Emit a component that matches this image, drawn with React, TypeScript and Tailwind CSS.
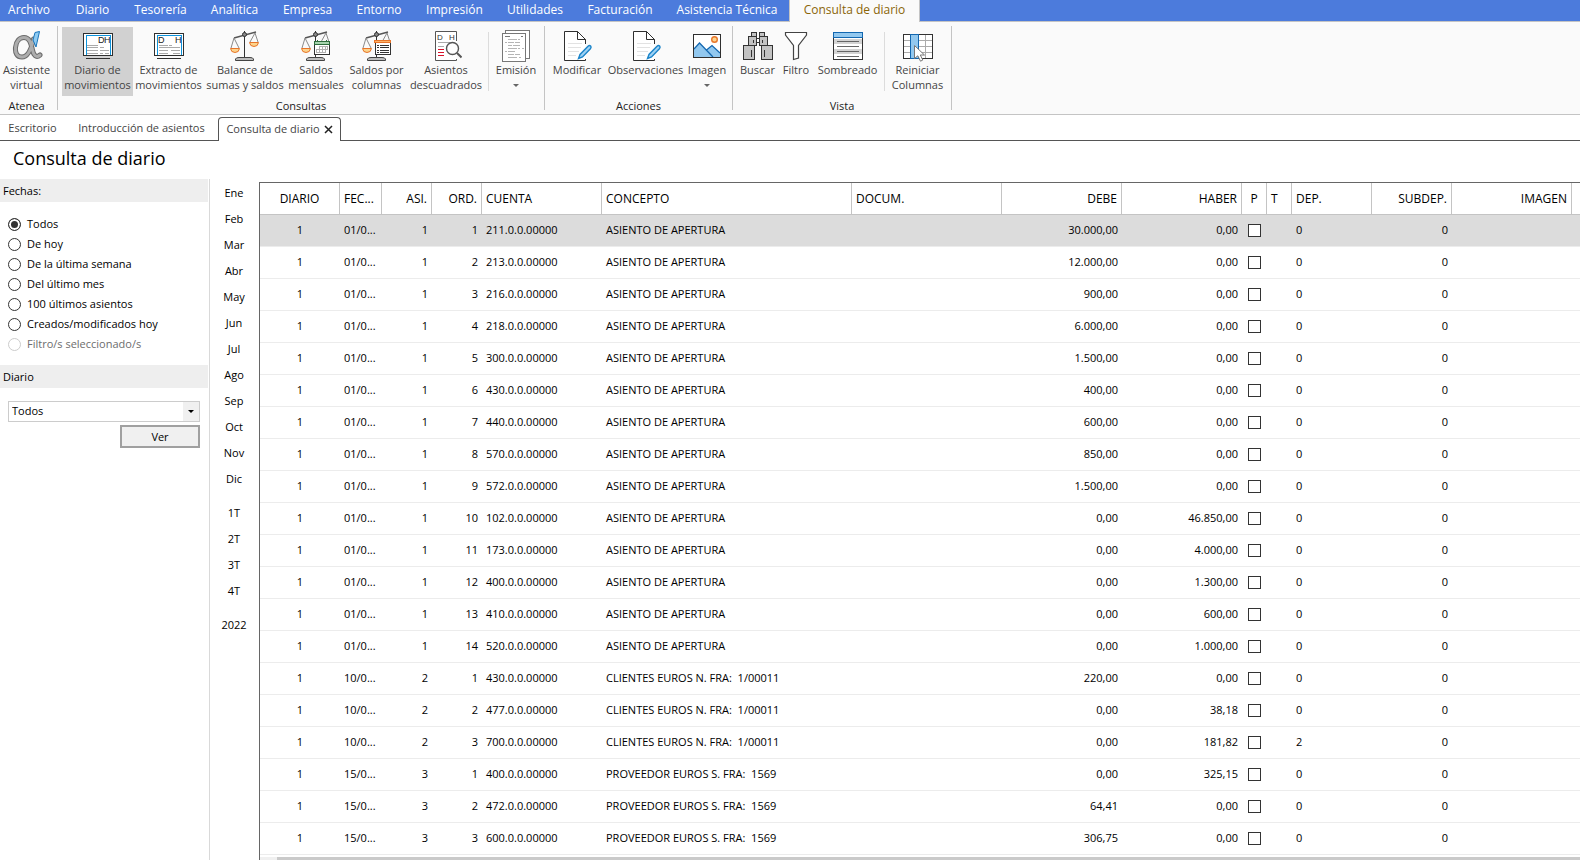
import { ReactNode, useState } from "react";
import clsx from "clsx";

/* ---------- Iconos de la cinta (32x32) ---------- */

const Icon = ({ children, crisp = true }: { children: ReactNode; crisp?: boolean }) => (
  <svg
    width="32"
    height="32"
    viewBox="0 0 32 32"
    fill="none"
    shapeRendering={crisp ? "crispEdges" : "auto"}
    className="shrink-0"
    aria-hidden="true"
  >
    {children}
  </svg>
);

const AtheneaLoop = ({ stroke, width }: { stroke: string; width: number }) => (
  <path
    d="M22.5 9C21 16 18 27 11 27C6 27 4 23 4.500 17.500C5 11.500 8.500 7.500 13 7.500C19 7.500 20 14 21.500 20C22.500 25 25 28.500 29 25"
    stroke={stroke}
    strokeWidth={width}
    strokeLinecap="round"
  />
);

const AtheneaIcon = () => (
  <Icon crisp={false}>
    <AtheneaLoop stroke="#6b6b6b" width={5} />
    <AtheneaLoop stroke="#adadad" width={3} />
    <path d="M24 2.500 28.500 1.500 25 17 22 10z" fill="#8ecbf2" stroke="#1b75bb" />
  </Icon>
);

const ScreenIcon = ({ wide }: { wide?: boolean }) => (
  <Icon>
    <rect x="1.5" y="3.5" width="29" height="22" fill="#fff" stroke="#2f2f2f" />
    <path d="M4.5 25V5.5H28.5V25" stroke="#0e94dc" />
    <text x={wide ? 5 : 16} y="13" fontSize="9" fontFamily="Liberation Sans, sans-serif" fill="#222">D</text>
    <text x="22" y="13" fontSize="9" fontFamily="Liberation Sans, sans-serif" fill="#222">H</text>
    {wide ? (
      <path d="M6 15.5H15M16 15.5H19M6 17.5H27M6 20.5H15M18 20.5H27M6 23.5H15M20 23.5H27" stroke="#aaa" />
    ) : (
      <path d="M5 15.5H16M5 17.5H16M18 17.5H22M5 20.5H16M18 20.5H27M5 23.5H16M18 23.5H21M23 23.5H27" stroke="#aaa" />
    )}
    <path d="M4 28.5H28" stroke="#2f2f2f" />
  </Icon>
);

const Scales = () => (
  <>
    <path d="M5 8 27 2" stroke="#555" strokeWidth="1.4" />
    <path d="M5 8 2 18M5 8 10 18M26 3 21 12M26 3 29 12" stroke="#8a8a8a" />
    <path d="M15.5 1V27" stroke="#333" />
    <circle cx="15.5" cy="4.5" r="2" fill="#888" stroke="#333" />
    <path d="M1.5 18.5H10.5Q10 22.5 6 22.5Q2 22.5 1.5 18.5z" fill="#fcd48c" stroke="#e8752a" />
    <path d="M6.5 30.5V29Q7 27.5 10 27.5H21Q24 27.5 24.5 29V30.5z" fill="#bdbdbd" stroke="#444" />
  </>
);

const BalanceIcon = () => (
  <Icon crisp={false}>
    <Scales />
    <path d="M20.5 12.5H29.5Q29 16.5 25 16.5Q21 16.5 20.5 12.5z" fill="#fcd48c" stroke="#e8752a" />
  </Icon>
);

const MonthlyIcon = () => (
  <Icon crisp={false}>
    <Scales />
    <rect x="14.5" y="11.5" width="15" height="13" fill="#fff" stroke="#333" />
    <rect x="14.5" y="11.5" width="15" height="3" fill="#a5d3ad" stroke="#2e6b3c" />
    <path d="M17.5 10V12M26.5 10V12" stroke="#2e6b3c" />
    <path d="M19 16.5H28M16 19.5H28M16 22.5H25M16.5 19V23M19.5 16V23M22.5 16V23M25.5 16V23M27.5 16V20" stroke="#b0b0b0" />
  </Icon>
);

const ColumnsIcon = () => (
  <Icon crisp={false}>
    <Scales />
    <rect x="14.5" y="11.5" width="15" height="13" fill="#fff" stroke="#333" />
    <rect x="13.5" y="10.5" width="16" height="2" fill="#fcb36a" stroke="#e8752a" />
    <path d="M16 15.5H18M19 15.5H28M16 17.5H18M19 17.5H28M16 20.5H18M19 20.5H28M16 22.5H18M19 22.5H28" stroke="#333" />
  </Icon>
);

const UnbalancedIcon = () => (
  <Icon crisp={false}>
    <path d="M26.5 11V1.5H5.5V30.5H26.5V29" fill="#fff" stroke="#555" />
    <text x="7" y="10" fontSize="8" fontFamily="Liberation Sans, sans-serif" fill="#333">D</text>
    <text x="19" y="10" fontSize="8" fontFamily="Liberation Sans, sans-serif" fill="#333">H</text>
    <path d="M8 12.5H20M8 16.5H14" stroke="#aaa" />
    <path d="M8 19.5H14M8 22.5H14M8 25.5H14" stroke="#d9102a" />
    <circle cx="22.5" cy="18.5" r="6" fill="#fff" stroke="#555" strokeWidth="1.4" />
    <path d="M27 23 31.5 27.5" stroke="#555" strokeWidth="2" />
  </Icon>
);

const EmissionIcon = () => (
  <Icon>
    <rect x="5.5" y=".5" width="24" height="28" fill="#fff" stroke="#777" />
    <rect x="2.5" y="3.5" width="23" height="28" fill="#fff" stroke="#777" />
    <path d="M5 6.5H10M21 6.5H23" stroke="#777" />
    <path d="M8 9.5H17M18 9.5H20M5 12.5H7M8 12.5H14M15 12.5H20M8 15.5H12M13 15.5H20M8 18.5H17M18 18.5H20M22 18.5H24M5 21.5H7M8 21.5H15M8 24.5H14M15 24.5H20M8 27.5H17M19 27.5H21" stroke="#b5b5b5" />
  </Icon>
);

const EditPageIcon = () => (
  <Icon crisp={false}>
    <path d="M24.5 14V9.5L16.5 1.5H3.5V30.5H24.5V29" fill="#fff" stroke="#2f2f2f" />
    <path d="M16.5 1.5V9.5H24.5z" fill="#fff" stroke="#2f2f2f" />
    <path d="M7 13.5H21M7 17.5H20M7 21.5H18M7 25.5H15" stroke="#e2e2e2" />
    <path d="M17.5 28.5 19 24.5 27 16.2Q28.5 15 29.8 16.2Q30.5 17.5 29.4 18.8L21.5 27z" fill="#9fd2f4" stroke="#1b84c9" strokeWidth="1.4" />
  </Icon>
);

const ImageIcon = () => (
  <Icon crisp={false}>
    <rect x="2.5" y="4.5" width="27" height="23" fill="#fff" />
    <path d="M3 19 8.5 13 22 27H3z" fill="#92c8ef" />
    <path d="M15.5 20 21 15.5 29 23V27H22z" fill="#92c8ef" />
    <path d="M3 19 8.5 13 22 27M15.5 20 21 15.5 29 23" stroke="#1267b0" strokeWidth="1.2" />
    <circle cx="23.5" cy="9.5" r="2.8" fill="#fcd48c" stroke="#e8752a" strokeWidth="1.4" />
    <rect x="2.5" y="4.5" width="27" height="23" stroke="#2f2f2f" />
  </Icon>
);

const BinocularsIcon = () => (
  <Icon>
    <g fill="#c3c3c3" stroke="#333">
      <rect x="9.5" y="2.5" width="5" height="4" />
      <rect x="17.5" y="2.5" width="5" height="4" />
      <rect x="6.5" y="6.5" width="8" height="9" />
      <rect x="17.5" y="6.5" width="8" height="9" />
      <rect x="14.5" y="8.5" width="3" height="4" fill="#fff" />
      <rect x="1.5" y="15.5" width="11" height="14" />
      <rect x="19.5" y="15.5" width="11" height="14" />
    </g>
    <path d="M9.5 20V27M22.5 20V27M11.5 10V13M20.5 10V13" stroke="#333" />
  </Icon>
);

const FilterIcon = () => (
  <Icon crisp={false}>
    <path d="M5.5 2.5H26.5V5L18.5 15.5V28L13.5 29.5V15.5L5.5 5z" fill="#fff" stroke="#444" strokeWidth="1.2" />
  </Icon>
);

const ShadingIcon = () => (
  <Icon>
    <rect x="1.5" y="2.5" width="29" height="27" fill="#fff" stroke="#333" />
    <path d="M2 11H30M2 21.5H30" stroke="#d4d4d4" strokeWidth="5" />
    <path d="M5 11.5H27M5 16.5H27M5 21.5H27M5 26.5H27" stroke="#666" />
    <rect x="1.5" y="2.5" width="29" height="5" fill="#92c8ef" stroke="#1267b0" />
  </Icon>
);

const ResetColumnsIcon = () => (
  <Icon crisp={false}>
    <rect x="1.5" y="4.5" width="29" height="24" fill="#fff" stroke="#333" />
    <path d="M2 10.5H30M2 16.5H30M2 22.5H30M16.5 5V28M23.5 5V28" stroke="#ababab" />
    <rect x="8.5" y="4.500" width="8" height="24" fill="#92c8ef" stroke="#1267b0" />
    <path d="M12.5 15.5V28.5L15.8 25.8 18.5 31.2 20.8 30 18.3 25H22.5z" fill="#fff" stroke="#777" />
  </Icon>
);

/* ---------- Datos ---------- */

const MENUS = [
  { label: "Archivo", width: "w-[62px] pr-1" },
  { label: "Diario", width: "w-[61px]" },
  { label: "Tesorería", width: "w-[75px]" },
  { label: "Analítica", width: "w-[73px]" },
  { label: "Empresa", width: "w-[73px]" },
  { label: "Entorno", width: "w-[70px]" },
  { label: "Impresión", width: "w-[81px]" },
  { label: "Utilidades", width: "w-[80px]" },
  { label: "Facturación", width: "w-[90px]" },
  { label: "Asistencia Técnica", width: "w-[124px]" },
];

const DATE_FILTERS = [
  "Todos",
  "De hoy",
  "De la última semana",
  "Del último mes",
  "100 últimos asientos",
  "Creados/modificados hoy",
  "Filtro/s seleccionado/s",
];

const MONTHS = ["Ene", "Feb", "Mar", "Abr", "May", "Jun", "Jul", "Ago", "Sep", "Oct", "Nov", "Dic"];
const QUARTERS = ["1T", "2T", "3T", "4T"];

const COLUMNS = [
  { label: "DIARIO", width: "w-20", align: "text-center" },
  { label: "FEC...", width: "w-[42px]", align: "text-left" },
  { label: "ASI.", width: "w-[50px]", align: "text-right" },
  { label: "ORD.", width: "w-[50px]", align: "text-right" },
  { label: "CUENTA", width: "w-[120px]", align: "text-left" },
  { label: "CONCEPTO", width: "w-[250px]", align: "text-left" },
  { label: "DOCUM.", width: "w-[150px]", align: "text-left" },
  { label: "DEBE", width: "w-[120px]", align: "text-right" },
  { label: "HABER", width: "w-[120px]", align: "text-right" },
  { label: "P", width: "w-[25px]", align: "text-center" },
  { label: "T", width: "w-[25px]", align: "text-left" },
  { label: "DEP.", width: "w-20", align: "text-left" },
  { label: "SUBDEP.", width: "w-20", align: "text-right" },
  { label: "IMAGEN", width: "w-[120px]", align: "text-right" },
];

type Entry = {
  date: string;
  asi: number;
  ord: number;
  account: string;
  concept: string;
  debe: string;
  haber: string;
  dep?: string;
};

const opening = (ord: number, account: string, debe: string, haber: string): Entry => ({
  date: "01/0...",
  asi: 1,
  ord,
  account,
  concept: "ASIENTO DE APERTURA",
  debe,
  haber,
});

const CLIENT = "CLIENTES EUROS N. FRA:  1/00011";
const SUPPLIER = "PROVEEDOR EUROS S. FRA:  1569";

const ENTRIES: Entry[] = [
  opening(1, "211.0.0.00000", "30.000,00", "0,00"),
  opening(2, "213.0.0.00000", "12.000,00", "0,00"),
  opening(3, "216.0.0.00000", "900,00", "0,00"),
  opening(4, "218.0.0.00000", "6.000,00", "0,00"),
  opening(5, "300.0.0.00000", "1.500,00", "0,00"),
  opening(6, "430.0.0.00000", "400,00", "0,00"),
  opening(7, "440.0.0.00000", "600,00", "0,00"),
  opening(8, "570.0.0.00000", "850,00", "0,00"),
  opening(9, "572.0.0.00000", "1.500,00", "0,00"),
  opening(10, "102.0.0.00000", "0,00", "46.850,00"),
  opening(11, "173.0.0.00000", "0,00", "4.000,00"),
  opening(12, "400.0.0.00000", "0,00", "1.300,00"),
  opening(13, "410.0.0.00000", "0,00", "600,00"),
  opening(14, "520.0.0.00000", "0,00", "1.000,00"),
  { date: "10/0...", asi: 2, ord: 1, account: "430.0.0.00000", concept: CLIENT, debe: "220,00", haber: "0,00" },
  { date: "10/0...", asi: 2, ord: 2, account: "477.0.0.00000", concept: CLIENT, debe: "0,00", haber: "38,18" },
  { date: "10/0...", asi: 2, ord: 3, account: "700.0.0.00000", concept: CLIENT, debe: "0,00", haber: "181,82", dep: "2" },
  { date: "15/0...", asi: 3, ord: 1, account: "400.0.0.00000", concept: SUPPLIER, debe: "0,00", haber: "325,15" },
  { date: "15/0...", asi: 3, ord: 2, account: "472.0.0.00000", concept: SUPPLIER, debe: "64,41", haber: "0,00" },
  { date: "15/0...", asi: 3, ord: 3, account: "600.0.0.00000", concept: SUPPLIER, debe: "306,75", haber: "0,00" },
];

/* ---------- Cinta ---------- */

const RibbonButton = ({ icon, lines, width, active, menu }: {
  icon: ReactNode;
  lines: string[];
  width: string;
  active?: boolean;
  menu?: boolean;
}) => (
  <button
    type="button"
    className={clsx(
      "flex h-[69px] shrink-0 flex-col items-center pt-[3px] text-[#444]",
      width,
      active && "bg-[#d1d1d1]",
    )}
  >
    {icon}
    {lines.map((line) => (
      <span key={line} className="whitespace-nowrap leading-[15px]">{line}</span>
    ))}
    {menu && <span className="mt-[7px] border-x-[3px] border-t-[3px] border-x-transparent border-t-[#666]" />}
  </button>
);

const RibbonGroup = ({ label, padding = "px-1", children }: {
  label: string;
  padding?: string;
  children: ReactNode;
}) => (
  <div className={clsx("h-[84px] shrink-0 border-r border-[#c4c4c4]", padding)}>
    <div className="flex pt-px">{children}</div>
    <div className="pt-[3px] text-center leading-[14px] text-[#222]">{label}</div>
  </div>
);

const RibbonDivider = () => <div className="mx-[3px] mt-[5px] h-[59px] w-px shrink-0 bg-[#dcdcdc]" />;

const Ribbon = () => (
  <div className="flex h-[93px] shrink-0 border-b border-[#c4c4c4] bg-[#fafafa] pt-1 text-[11px]">
    <RibbonGroup label="Atenea" padding="pl-0.5 pr-1.5">
      <RibbonButton icon={<AtheneaIcon />} lines={["Asistente", "virtual"]} width="w-[49px]" />
    </RibbonGroup>
    <RibbonGroup label="Consultas">
      <RibbonButton icon={<ScreenIcon />} lines={["Diario de", "movimientos"]} width="w-[71px]" active />
      <RibbonButton icon={<ScreenIcon wide />} lines={["Extracto de", "movimientos"]} width="w-[71px]" />
      <RibbonButton icon={<BalanceIcon />} lines={["Balance de", "sumas y saldos"]} width="w-[82px]" />
      <RibbonButton icon={<MonthlyIcon />} lines={["Saldos", "mensuales"]} width="w-[60px]" />
      <RibbonButton icon={<ColumnsIcon />} lines={["Saldos por", "columnas"]} width="w-[61px]" />
      <RibbonButton icon={<UnbalancedIcon />} lines={["Asientos", "descuadrados"]} width="w-[78px]" />
      <RibbonDivider />
      <RibbonButton icon={<EmissionIcon />} lines={["Emisión"]} width="w-12" menu />
    </RibbonGroup>
    <RibbonGroup label="Acciones">
      <RibbonButton icon={<EditPageIcon />} lines={["Modificar"]} width="w-14" />
      <RibbonButton icon={<EditPageIcon />} lines={["Observaciones"]} width="w-[81px]" />
      <RibbonButton icon={<ImageIcon />} lines={["Imagen"]} width="w-[42px]" menu />
    </RibbonGroup>
    <RibbonGroup label="Vista">
      <RibbonButton icon={<BinocularsIcon />} lines={["Buscar"]} width="w-[41px]" />
      <RibbonButton icon={<FilterIcon />} lines={["Filtro"]} width="w-9" />
      <RibbonButton icon={<ShadingIcon />} lines={["Sombreado"]} width="w-[67px]" />
      <RibbonDivider />
      <RibbonButton icon={<ResetColumnsIcon />} lines={["Reiniciar", "Columnas"]} width="w-[59px]" />
    </RibbonGroup>
  </div>
);

/* ---------- Panel lateral ---------- */

const PanelHeader = ({ children }: { children: ReactNode }) => (
  <h2 className="mr-px h-[23px] bg-[#eee] pl-[3px] leading-[23px]">{children}</h2>
);

const Sidebar = () => {
  const [filter, setFilter] = useState("Todos");

  return (
    <aside className="w-[210px] shrink-0 border-r border-[#d9d9d9] text-[11px]">
      <PanelHeader>Fechas:</PanelHeader>
      <div className="flex flex-col pt-3 pb-[11px] pl-2">
        {DATE_FILTERS.map((label, i) => {
          const disabled = i === DATE_FILTERS.length - 1;
          return (
            <label key={label} className={clsx("flex h-5 items-center gap-1.5", disabled && "text-[#6d6d6d]")}>
              <input
                type="radio"
                name="fechas"
                checked={filter === label}
                disabled={disabled}
                onChange={() => setFilter(label)}
                className="size-[13px] appearance-none rounded-full border border-[#333] bg-white checked:bg-[#333] checked:shadow-[inset_0_0_0_2px_white] disabled:border-[#ccc]"
              />
              {label}
            </label>
          );
        })}
      </div>
      <PanelHeader>Diario</PanelHeader>
      <div className="flex flex-col items-end gap-[3px] pt-[13px] pr-[9px] pl-2">
        <div className="relative w-full">
          <select aria-label="Diario" className="block h-[21px] w-full appearance-none border border-[#ccc] bg-white pl-[3px]">
            <option>Todos</option>
          </select>
          <span className="pointer-events-none absolute inset-y-px right-px flex w-4 items-center justify-center bg-[#f0f0f0]">
            <span className="border-x-[3px] border-t-[3px] border-x-transparent border-t-black" />
          </span>
        </div>
        <button type="button" className="h-[23px] w-20 border-2 border-[#a0a0a0] bg-[#f0f0f0] leading-[19px]">Ver</button>
      </div>
    </aside>
  );
};

const PeriodButton = ({ label }: { label: string }) => (
  <button type="button" className="h-[26px] w-full">{label}</button>
);

const PeriodList = () => (
  <nav className="flex w-12 shrink-0 flex-col gap-2 pt-px text-[11px]">
    <div>{MONTHS.map((m) => <PeriodButton key={m} label={m} />)}</div>
    <div>{QUARTERS.map((q) => <PeriodButton key={q} label={q} />)}</div>
    <div><PeriodButton label="2022" /></div>
  </nav>
);

/* ---------- Tabla ---------- */

const JournalTable = () => (
  <div className="mt-[3px] ml-px min-w-0 flex-1 overflow-hidden border-t border-l border-[#666]">
    <table className="w-full table-fixed border-separate border-spacing-0 text-[11px] whitespace-pre">
      <thead>
        <tr className="h-8 text-[12px]">
          {COLUMNS.map((c) => (
            <th
              key={c.label}
              className={clsx("border-r border-b border-[#c4c4c4] px-1 font-normal", c.width, c.align)}
            >
              {c.label}
            </th>
          ))}
          <th className="border-b border-[#c4c4c4]" />
        </tr>
      </thead>
      <tbody>
        {ENTRIES.map((e, i) => (
          <tr
            key={`${e.asi}-${e.ord}`}
            className={clsx(
              "h-8 [&>td]:border-b [&>td]:border-[#ececec] [&>td]:px-1",
              i === 0 && "bg-[#dcdcdc]",
            )}
          >
            <td className="text-center">1</td>
            <td>{e.date}</td>
            <td className="text-right">{e.asi}</td>
            <td className="text-right">{e.ord}</td>
            <td>{e.account}</td>
            <td>{e.concept}</td>
            <td />
            <td className="text-right">{e.debe}</td>
            <td className="text-right">{e.haber}</td>
            <td>
              <input
                type="checkbox"
                aria-label={`Punteado ${e.asi}/${e.ord}`}
                className="mx-auto block size-[13px] appearance-none border border-[#333] bg-white checked:bg-[#333]"
              />
            </td>
            <td />
            <td>{e.dep ?? "0"}</td>
            <td className="text-right">0</td>
            <td />
            <td />
          </tr>
        ))}
      </tbody>
    </table>
    <div className="mt-0.5 h-[17px] bg-[#f0f0f0] pl-[17px]">
      <div className="h-full bg-[#cacaca]" />
    </div>
  </div>
);

export default function App() {
  return (
    <div className="flex h-screen flex-col overflow-hidden bg-white font-['Open_Sans','Noto_Sans',sans-serif] text-[12px] text-black">
      <nav className="flex h-[22px] shrink-0 border-b border-[#c4c4c4] bg-[#4c7bdc] text-[12px] text-white">
        {MENUS.map((m) => (
          <button key={m.label} type="button" className={clsx("shrink-0 pb-px whitespace-nowrap", m.width)}>
            {m.label}
          </button>
        ))}
        <button type="button" className="h-[22px] w-[131px] shrink-0 border-x border-[#c4c4c4] bg-[#fafafa] pb-0.5 whitespace-nowrap text-[#8a6508]">
          Consulta de diario
        </button>
      </nav>
      <Ribbon />

      <div className="flex h-[26px] shrink-0 items-end text-[11px] text-[#444]">
        <button type="button" className="h-full w-[65px] border-b border-[#555] pt-0.5">Escritorio</button>
        <button type="button" className="h-full w-[153px] border-b border-[#555] pt-0.5">Introducción de asientos</button>
        <div className="flex h-6 w-[123px] items-center justify-center gap-1 rounded-t-[4px] border border-b-0 border-[#555]">
          <button type="button">Consulta de diario</button>
          <button type="button" aria-label="Cerrar">
            <svg width="9" height="9" viewBox="0 0 9 9" stroke="#222" strokeWidth="1.5"><path d="M1 1 8 8M8 1 1 8" /></svg>
          </button>
        </div>
        <div className="h-full flex-1 border-b border-[#555]" />
      </div>

      <h1 className="h-[38px] shrink-0 pl-[13px] text-[18px] leading-[34px]">Consulta de diario</h1>

      <main className="flex min-h-0 flex-1">
        <Sidebar />
        <PeriodList />
        <JournalTable />
      </main>
    </div>
  );
}
